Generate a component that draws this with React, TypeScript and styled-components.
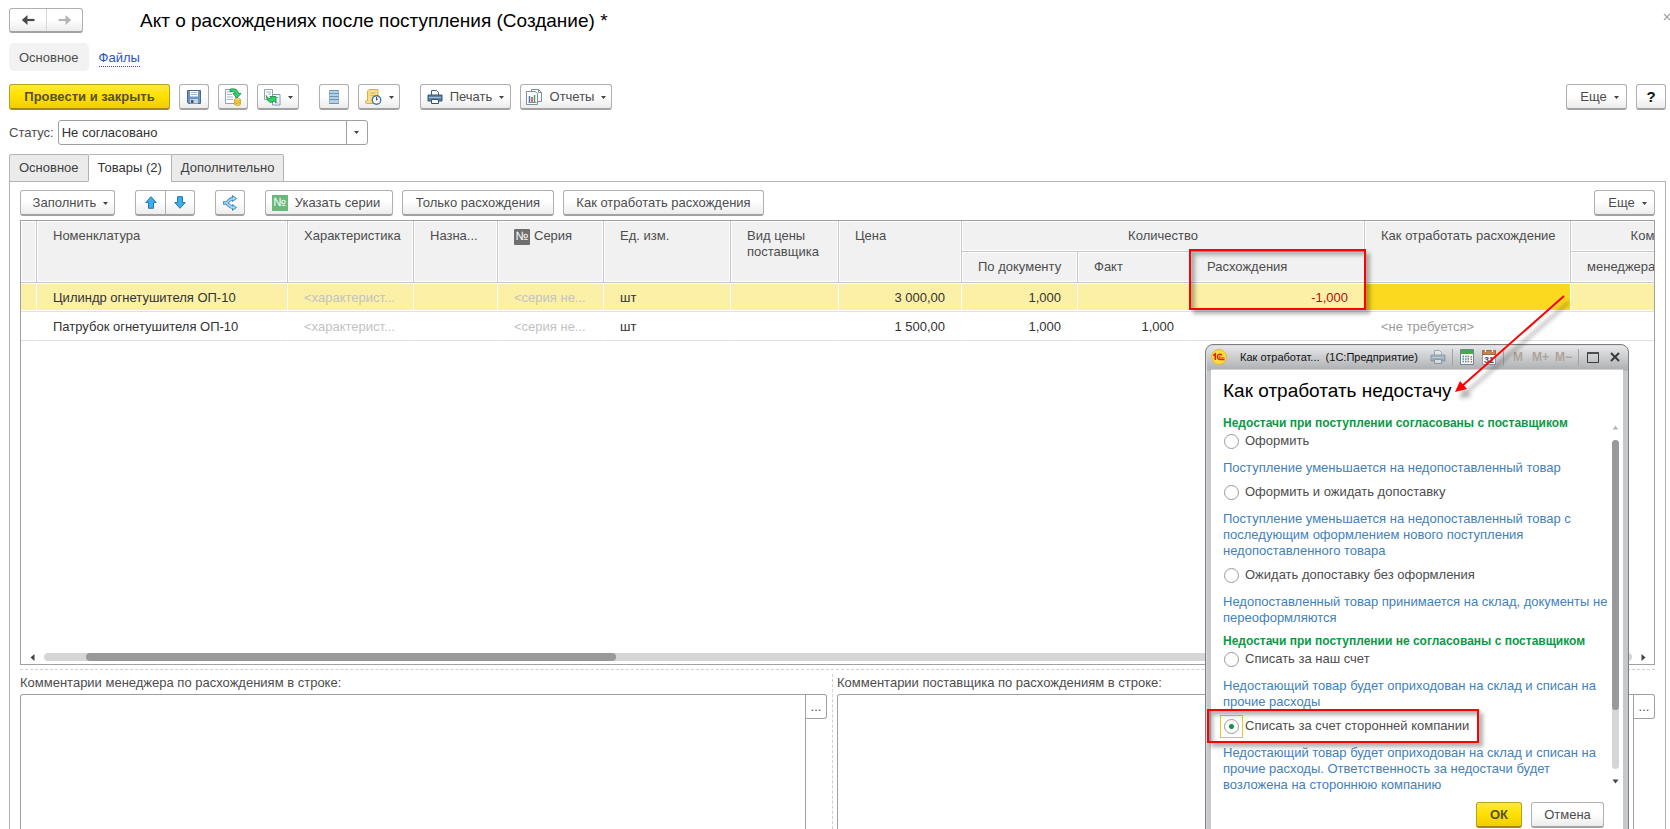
import React, { useState } from "react";
import styled, { createGlobalStyle, css } from "styled-components";

const Global = createGlobalStyle`
  *, *::before, *::after { box-sizing: border-box; }
  body { margin: 0; background: #fff; }
  body, button, input, select, textarea {
    font-family: "Liberation Sans", Arial, sans-serif;
    font-size: 13px;
    line-height: 16px;
    color: #4d4d4d;
  }
`;

/* ---------- page frame ---------- */

const Page = styled.main`
  position: relative;
  display: flex;
  flex-direction: column;
  height: 100vh;
  min-height: 640px;
  padding: 8px 4px 0 9px;
  overflow: hidden;
`;

const TitleRow = styled.header`
  display: flex;
  align-items: center;
  height: 25px;
  gap: 57px;
`;

const Title = styled.h1`
  margin: 0;
  flex: 1;
  font-size: 19px;
  line-height: 24px;
  font-weight: 400;
  color: #000;
`;

const CloseForm = styled.button`
  position: absolute;
  top: 9px;
  right: -5px;
  width: 16px;
  height: 16px;
  padding: 0;
  border: 0;
  background: none;
  color: #a0a0a0;
`;

const SectionNav = styled.nav`
  display: flex;
  align-items: center;
  gap: 10px;
  margin: 10px 0 13px;
`;

const SectionCurrent = styled.button`
  height: 28px;
  padding: 1px 10px 0;
  border: 0;
  border-radius: 5px;
  background: #f2f2f2;
`;

const SectionLink = styled.a`
  padding-top: 2px;
  color: #2a53c0;
  text-decoration: none;
  border-bottom: 1px dotted #2a53c0;
`;

const Bar = styled.div`
  display: flex;
  gap: 9px;
`;

const Gap = styled.span<{ $grow?: boolean }>`
  ${(p) => (p.$grow ? "flex: 1;" : "width: 2px;")}
`;

const raised = css`
  border: 1px solid #b0b0b0;
  border-bottom: 2px solid #a2a2a2;
  border-radius: 3px;
  background: linear-gradient(#fff 45%, #ececec);
`;

const Button = styled.button<{ $w: number; $primary?: boolean; $menu?: boolean; $lead?: boolean; $help?: boolean }>`
  ${raised}
  display: inline-flex;
  align-items: center;
  justify-content: center;
  flex: none;
  gap: 7px;
  width: ${(p) => p.$w}px;
  height: 26px;
  padding: 1px ${(p) => (p.$lead ? 6 : 0)}px 0 ${(p) => (p.$menu ? 6 : 0)}px;
  white-space: nowrap;
  ${(p) => p.$help && "font-size: 15px; font-weight: 700; color: #111;"}
  ${(p) =>
    p.$primary &&
    css`
      border-color: #b8a21a;
      border-bottom-color: #a08c10;
      background: linear-gradient(#ffe93a, #ffe000 50%, #f0ce00);
      font-weight: 700;
      color: #57502a;
    `}
`;

const Pair = styled.div`
  display: flex;
  ${raised}
`;

const PairButton = styled.button`
  display: flex;
  align-items: center;
  justify-content: center;
  width: 29px;
  height: 23px;
  padding: 0;
  border: 0;
  background: none;
  & + & {
    border-left: 1px solid #b0b0b0;
  }
`;

const HistoryPair = styled(Pair)`
  ${PairButton} {
    width: 36px;
    height: 22px;
  }
  ${PairButton} + ${PairButton} {
    border-color: #d8d8d8;
  }
`;

/* ---------- status field ---------- */

const StatusRow = styled.div`
  display: flex;
  align-items: center;
  gap: 4px;
  margin: 10px 0 9px;
`;

const SelectBox = styled.div`
  position: relative;
  width: 310px;
  svg {
    position: absolute;
    right: 9px;
    top: 11px;
    pointer-events: none;
  }
  &::after {
    content: "";
    position: absolute;
    right: 21px;
    top: 0;
    bottom: 0;
    border-left: 1px solid #a0a0a0;
  }
`;

const Select = styled.select`
  appearance: none;
  display: block;
  width: 100%;
  height: 25px;
  padding: 0 24px 0 3px;
  border: 1px solid #a0a0a0;
  border-radius: 3px;
  background: #fff;
  color: #333;
`;

/* ---------- tabs ---------- */

const Tabs = styled.div`
  display: flex;
  position: relative;
  z-index: 1;
`;

const Tab = styled.button<{ $on?: boolean }>`
  height: 28px;
  margin-bottom: -1px;
  padding: 0 9px;
  border: 1px solid #b3b3b3;
  background: ${(p) => (p.$on ? "#fff" : "#ebebeb")};
  border-bottom-color: ${(p) => (p.$on ? "#fff" : "#b3b3b3")};
  border-radius: 2px 2px 0 0;
  color: ${(p) => (p.$on ? "#333" : "#404040")};
  & + & {
    margin-left: -1px;
  }
`;

const Panel = styled.section`
  flex: 1;
  display: flex;
  flex-direction: column;
  min-height: 0;
  padding: 8px 10px 0;
  border: 1px solid #b3b3b3;
  border-bottom: 0;
`;

/* ---------- goods table ---------- */

const Grid = styled.div`
  flex: 1;
  display: flex;
  flex-direction: column;
  justify-content: space-between;
  min-height: 0;
  margin-top: 4px;
  border: 1px solid #a0a0a0;
  overflow: hidden;
`;

const Table = styled.table`
  table-layout: fixed;
  width: 1652px;
  border-collapse: separate;
  border-spacing: 0;
`;

const Th = styled.th<{ $center?: boolean }>`
  position: relative;
  height: 31px;
  padding: 7px 0 0 16px;
  border-right: 1px solid #c6c6c6;
  border-bottom: 1px solid #c6c6c6;
  box-shadow: inset 0 0 0 1px #fff;
  background: #f1f1f1;
  font-weight: 400;
  vertical-align: top;
  text-align: left;
  white-space: nowrap;
  ${(p) => p.$center && "padding-left: 0; text-align: center;"}
`;

const Td = styled.td<{ $right?: boolean; $tone?: "muted" | "hint" | "minus" | "current" }>`
  height: 29px;
  padding: 1px 16px 0;
  border-right: 1px solid #fff;
  border-bottom: 1px solid #e0e0e0;
  white-space: nowrap;
  overflow: hidden;
  text-align: ${(p) => (p.$right ? "right" : "left")};
  color: ${(p) =>
    p.$tone === "muted" ? "#c3c3c3" : p.$tone === "hint" ? "#9b9b9b" : p.$tone === "minus" ? "#b01010" : "#333"};
`;

const Row = styled.tr<{ $selected?: boolean }>`
  ${(p) =>
    p.$selected &&
    css`
      ${Td} {
        background: #fcf0a6;
        box-shadow: inset 0 1px #fff, inset 0 -1px #fff;
      }
      ${Td}:nth-child(12) {
        background: #fbd91f;
      }
    `}
`;

const NumberBadge = styled.span<{ $green?: boolean }>`
  display: inline-block;
  width: 16px;
  height: 16px;
  line-height: 15px;
  font-size: 12px;
  text-align: center;
  color: #fff;
  background: ${(p) => (p.$green ? "#67b97c" : "#6f6f6f")};
  ${(p) => !p.$green && "margin-right: 4px; border-radius: 1px;"}
`;

const RedFrame = styled.div`
  position: absolute;
  z-index: 2;
  border: 2px solid #f00;
  box-shadow: 4px 4px 4px rgba(0, 0, 0, 0.3), inset 4px 4px 4px rgba(0, 0, 0, 0.3);
  pointer-events: none;
`;

const CellFrame = styled(RedFrame)`
  top: -3px;
  left: -2px;
  right: -2px;
  height: 61px;
`;

const HScroll = styled.div`
  display: flex;
  align-items: center;
  gap: 8px;
  padding: 0 7px 3px 8px;
`;

const HTrack = styled.div`
  flex: 1;
  height: 8px;
  padding-left: 42px;
  border-radius: 4px;
  background: #d6d6d6;
`;

const HThumb = styled.div`
  width: 530px;
  height: 8px;
  border-radius: 4px;
  background: #999;
`;

/* ---------- comments ---------- */

const Comments = styled.div`
  display: grid;
  grid-template-columns: 813px 1fr;
  flex: 0 0 160px;
  margin-top: 4px;
  border-top: 1px dashed #d0d0d0;
`;

const Comment = styled.div`
  display: grid;
  grid-template-rows: 17px 1fr;
  grid-template-columns: 1fr 21px;
  row-gap: 3px;
  margin-top: 4px;
  & + & {
    padding-left: 4px;
  }
  &:first-child {
    padding-right: 5px;
    border-right: 1px dashed #d0d0d0;
  }
  label {
    grid-column: 1 / 3;
    padding-top: 1px;
  }
`;

const TextArea = styled.textarea`
  width: 100%;
  height: 100%;
  border: 1px solid #a0a0a0;
  border-bottom: 0;
  border-radius: 3px 0 0 0;
  resize: none;
`;

const More = styled.button`
  height: 25px;
  padding: 0;
  border: 1px solid #a0a0a0;
  border-left: 0;
  border-radius: 0 3px 3px 0;
  background: #fff;
`;

/* ---------- floating window ---------- */

const Window = styled.section`
  position: absolute;
  z-index: 3;
  top: 344px;
  right: 41px;
  width: 424px;
  border: 1px solid #7d7d7d;
  border-radius: 8px 8px 0 0;
  background: linear-gradient(#e9e9ea, #adb0b3 25px, #c6c9cc 26px);
  padding: 0 5px 5px;
  box-shadow: inset 1px 1px #d9dbdd;
`;

const WindowBar = styled.div`
  display: flex;
  align-items: center;
  height: 24px;
  color: #111;
  font-size: 11px;
`;

const Caption = styled.span`
  flex: 1;
  margin-left: 13px;
  white-space: pre;
`;

const WindowTools = styled.div`
  display: flex;
  align-items: center;
  gap: 6px;
`;

const Tool = styled.button`
  display: flex;
  align-items: center;
  justify-content: center;
  height: 16px;
  min-width: 16px;
  padding: 0;
  border: 0;
  background: none;
  font-size: 12px;
  font-weight: 700;
  color: #b0a398;
`;

const Divider = styled.span`
  width: 1px;
  height: 17px;
  background: #a2a2a2;
`;

const WindowBody = styled.div`
  padding: 9px 2px 2px 12px;
  background: #fff;
  border-top: 1px solid #d0d0d0;
`;

const WindowTitle = styled.h2`
  margin: 0 0 12px;
  font-size: 19px;
  line-height: 24px;
  font-weight: 400;
  color: #000;
`;

const Scroller = styled.div`
  display: flex;
  justify-content: space-between;
`;

const Options = styled.div`
  width: 387px;
`;

const GroupTitle = styled.h3`
  margin: 0 0 1px;
  font-size: 12px;
  line-height: 16px;
  font-weight: 700;
  color: #0a9a46;
  white-space: nowrap;
`;

const Option = styled.div`
  position: relative;
`;

const OptionFrame = styled(RedFrame)`
  top: -8px;
  left: -16px;
  width: 272px;
  height: 34px;
`;

const OptionLabel = styled.label`
  display: flex;
  align-items: center;
  gap: 6px;
  height: 18px;
  padding-left: 1px;
`;

const Radio = styled.input`
  appearance: none;
  width: 15px;
  height: 15px;
  margin: 0;
  border: 1px solid #9a9a9a;
  border-radius: 50%;
  background: #fff;
  &:checked {
    background: radial-gradient(circle, #0a9a46 2px, #fff 3px);
  }
`;

const FocusBox = styled.span<{ $on: boolean }>`
  display: flex;
  ${(p) => p.$on && "box-shadow: 0 0 0 3px #fff, 0 0 0 4px #f3c418;"}
`;

const Hint = styled.p`
  margin: 0;
  padding: 10px 0 7px;
  color: #4281bb;
`;

const VScroll = styled.div`
  display: flex;
  flex-direction: column;
  align-items: center;
  gap: 9px;
  width: 11px;
  padding: 9px 0 15px;
`;

const VTrack = styled.div`
  flex: 1;
  width: 7px;
  border-radius: 4px;
  background: #d6d6d6;
`;

const VThumb = styled.div`
  height: 82%;
  border-radius: 4px;
  background: #999;
`;

const WindowButtons = styled.div`
  display: flex;
  justify-content: flex-end;
  gap: 9px;
  padding: 2px 17px 4px 0;
`;

const Pointer = styled.svg`
  position: absolute;
  z-index: 4;
  top: 290px;
  right: 95px;
  pointer-events: none;
`;

/* ---------- icons ---------- */

const Caret = () => (
  <svg width="5" height="3" viewBox="0 0 5 3" aria-hidden="true">
    <path d="M0 0h5L2.5 3z" fill="#444" />
  </svg>
);

const NavArrow = ({ flip, color }: { flip?: boolean; color: string }) => (
  <svg width="14" height="12" viewBox="0 0 14 12" aria-hidden="true">
    <g transform={flip ? "matrix(-1 0 0 1 14 0)" : undefined}>
      <path d="M.8 6l5.700-5v3.800L4.500 6l2 1.200V11z" fill={color} />
      <path d="M3 6h10.500" stroke={color} strokeWidth="2.200" />
    </g>
  </svg>
);

const SaveIcon = () => (
  <svg width="16" height="16" viewBox="0 0 16 16" aria-hidden="true">
    <path d="M1.500 1.500h13v13h-12l-1-1z" fill="#6d94c0" stroke="#47698f" />
    <path d="M4 2h8v5.500H4z" fill="#fff" />
    <path d="M5 3.500h6M5 5.500h6" stroke="#9db3cc" />
    <path d="M4 10h8v4.500H4z" fill="#c4d3e3" />
    <path d="M5 11h2.500v3H5z" fill="#385878" />
  </svg>
);

const PostIcon = () => (
  <svg width="18" height="18" viewBox="0 0 18 18" aria-hidden="true">
    <path d="M1.500 1.500h10v14h-10z" fill="#fff" stroke="#93a3b1" />
    <path d="M3 4h4M3 6.500h5M3 9h6M3 11.500h6" stroke="#a9b5c0" />
    <path d="M6 1.200c5-1.200 8 .6 8.500 4.300h2.500l-4 4.500-4-4.500h2.300c-.3-1.800-2-2.300-5.300-2z" fill="#2fd366" stroke="#138a42" strokeWidth=".8" />
    <path d="M10.500 11.800v4.400c0 1.600 6 1.600 6 0v-4.400z" fill="#f4cf4f" stroke="#d6a92a" />
    <ellipse cx="13.500" cy="11.800" rx="3" ry="1.200" fill="#fbe79a" stroke="#d6a92a" />
    <path d="M10.500 14.200c0 1.300 6 1.300 6 0" fill="none" stroke="#d6a92a" />
  </svg>
);

const BasedOnIcon = () => (
  <svg width="17" height="17" viewBox="0 0 17 17" aria-hidden="true">
    <path d="M.5.5h8v10h-8z" fill="#fff" stroke="#93a3b1" />
    <path d="M2 3h5M4 5h3" stroke="#a9b5c0" />
    <path d="M8.500 5.500h7.500v10.500h-7.500z" fill="#fff" stroke="#7d99b2" />
    <path d="M12 8.500h2.500M11 14h3.500" stroke="#a9b5c0" />
    <path d="M2.200 4.500c1.300 2.800 3 3.600 5 2.400L5.800 5.600H12v6.200L10.200 10c-3.400 2.800-7.200 1-8-5.500z" transform="translate(0 2)" fill="#2fd366" stroke="#138a42" strokeWidth=".9" />
  </svg>
);

const RegisterIcon = () => (
  <svg width="12" height="16" viewBox="0 0 12 16" aria-hidden="true">
    <path d="M1 1h10v14H1z" fill="#b5cfe4" />
    <path d="M1 1.500h10M1 4.500h10M1 7.500h10M1 10.500h10M1 14.500h10" stroke="#6b93b5" strokeWidth="1.200" />
    <path d="M1.500 1v13.500M10.500 1v13.500" stroke="#88a9c5" strokeWidth=".7" />
  </svg>
);

const ReminderIcon = () => (
  <svg width="18" height="18" viewBox="0 0 18 18" aria-hidden="true">
    <path d="M5 1.500h9v12c0 1.500-.8 2-1.800 2H2.800c-1.800 0-1.800-3 0-3h.7V3z" fill="#f7dc8c" stroke="#d9ad4d" />
    <path d="M6.500 5h5M6.500 7.500h4" stroke="#dcb660" />
    <circle cx="12.500" cy="12" r="4.200" fill="#fff" stroke="#4674a5" strokeWidth="1.400" />
    <path d="M12.500 9v3.200" fill="none" stroke="#35577a" />
    <path d="M12.500 12.200l1.800-1.700" stroke="#d33" />
  </svg>
);

const PrinterIcon = ({ pale }: { pale?: boolean }) => (
  <svg width="16" height="16" viewBox="0 0 16 16" aria-hidden="true" opacity={pale ? 0.4 : 1}>
    <path d="M4.500 6.500v-5h5l2 2v3" fill="#fff" stroke="#41617e" />
    <path d="M1 6h14v6H1z" fill="#5b84a8" stroke="#35546f" />
    <path d="M2 8.500h12" stroke="#9fc0da" />
    <path d="M4.500 10.500h7v4h-7z" fill="#fff" stroke="#35546f" />
  </svg>
);

const ReportIcon = () => (
  <svg width="17" height="16" viewBox="0 0 17 16" aria-hidden="true">
    <path d="M5.500.500h7l3 3v9h-10z" fill="#fff" stroke="#7f8e9c" />
    <path d="M12.500.500v3h3" fill="none" stroke="#7f8e9c" />
    <path d="M.500 2.500h8.500l2.500 2v11h-11z" fill="#fff" stroke="#7f8e9c" />
    <path d="M3.500 7v6" stroke="#3a78b0" strokeWidth="1.500" />
    <path d="M6 8v5" stroke="#e23a2e" strokeWidth="1.500" />
    <path d="M8.500 6v7" stroke="#33a852" strokeWidth="1.500" />
    <path d="M2.500 13.500h8" stroke="#7f8e9c" />
  </svg>
);

const MoveIcon = ({ down }: { down?: boolean }) => (
  <svg width="12" height="13" viewBox="0 0 12 13" aria-hidden="true">
    <path
      transform={down ? "matrix(1 0 0 -1 0 13)" : undefined}
      d="M6 .7l5.200 5.800H8.500v5.800h-5V6.500H.8z"
      fill="#38b0f0"
      stroke="#2676a8"
    />
  </svg>
);

const SplitIcon = () => (
  <svg width="16" height="16" viewBox="0 0 16 16" aria-hidden="true">
    <g fill="none" stroke="#3c87b5" strokeWidth="3.400">
      <path d="M1 8h3c2-.2 3-4.500 7-4.500M4 8c2 .2 3 4.500 7 4.500" />
    </g>
    <path d="M10.500.600l4 2.900-4 2.900zM10.500 9.600l4 2.900-4 2.900z" fill="#a9dbf5" stroke="#3c87b5" />
    <g fill="none" stroke="#a9dbf5" strokeWidth="1.600">
      <path d="M1.800 8H4c2-.2 3-4.500 7.500-4.500M4 8c2 .2 3 4.500 7.500 4.500" />
    </g>
  </svg>
);

const ScrollArrow = ({ dir, color = "#444" }: { dir: "left" | "right" | "up" | "down"; color?: string }) => {
  const d = {
    left: "M5.500 0v7L1.500 3.500z",
    right: "M1.500 0v7l4-3.500z",
    up: "M.5 5.500h6l-3-4z",
    down: "M.5 1.500h6l-3 4z",
  }[dir];
  return (
    <svg width="7" height="7" viewBox="0 0 7 7" aria-hidden="true">
      <path d={d} fill={color} />
    </svg>
  );
};

const AppLogo = () => (
  <svg width="16" height="16" viewBox="0 0 16 16" aria-hidden="true">
    <circle cx="8" cy="8" r="7.500" fill="#fbdc3c" stroke="#e0b52c" strokeWidth=".8" />
    <path d="M2.300 6.500L4.300 5v6" fill="none" stroke="#d8201c" strokeWidth="1.600" />
    <path d="M10.700 6.200c-1.300-1.600-4.200-1-4.200 1.600 0 2 1.500 2.700 3 2.700h4" fill="none" stroke="#d8201c" strokeWidth="1.400" />
    <path d="M9.800 7.300c-1-.6-1.600.1-1.500.8.1.6.6.8 1.200.8h4" fill="none" stroke="#d8201c" strokeWidth=".8" />
  </svg>
);

const CalculatorIcon = () => (
  <svg width="14" height="16" viewBox="0 0 14 16" aria-hidden="true">
    <path d="M.5.5h13v15H.5z" fill="#f4f6f7" stroke="#6f8795" />
    <path d="M1 1h12v4H1z" fill="#3fae49" />
    <path d="M2.500 7.500h7M2.500 10h7M2.500 12.500h7" stroke="#667f8f" strokeWidth="1.500" strokeDasharray="1.500 1" />
    <path d="M11.300 7v6.500" stroke="#d2533f" strokeWidth="1.300" strokeDasharray="1.500 1" />
  </svg>
);

const CalendarIcon = () => (
  <svg width="14" height="16" viewBox="0 0 14 16" aria-hidden="true">
    <path d="M.5 1.500h13v14H.5z" fill="#fff" stroke="#8d9aa5" />
    <path d="M.5 1.500h13v4H.5z" fill="#c08457" stroke="#a4683d" />
    <path d="M3.500 0v3M10.500 0v3" stroke="#fff" strokeWidth="1.200" />
    <text x="7" y="13.500" textAnchor="middle" fontSize="9" fontWeight="700" fill="#4a5a68">31</text>
  </svg>
);

/* ---------- data ---------- */

const columns = [16, 251, 126, 84, 106, 127, 108, 123, 116, 113, 174, 206, 101, 101];

const goods = [
  { name: "Цилиндр огнетушителя ОП-10", price: "3 000,00", doc: "1,000", fact: "", diff: "-1,000", action: "", selected: true },
  { name: "Патрубок огнетушителя ОП-10", price: "1 500,00", doc: "1,000", fact: "1,000", diff: "", action: "<не требуется>", selected: false },
];

type Choice = { id: string; label: string; hint: string; framed?: boolean };

const groups: { title: string; choices: Choice[] }[] = [
  {
    title: "Недостачи при поступлении согласованы с поставщиком",
    choices: [
      { id: "issue", label: "Оформить", hint: "Поступление уменьшается на недопоставленный товар" },
      {
        id: "issueWait",
        label: "Оформить и ожидать допоставку",
        hint: "Поступление уменьшается на недопоставленный товар с последующим оформлением нового поступления недопоставленного товара",
      },
      {
        id: "wait",
        label: "Ожидать допоставку без оформления",
        hint: "Недопоставленный товар принимается на склад, документы не переоформляются",
      },
    ],
  },
  {
    title: "Недостачи при поступлении не согласованы с поставщиком",
    choices: [
      {
        id: "ours",
        label: "Списать за наш счет",
        hint: "Недостающий товар будет оприходован на склад и списан на прочие расходы",
      },
      {
        id: "third",
        label: "Списать за счет сторонней компании",
        hint: "Недостающий товар будет оприходован на склад и списан на прочие расходы. Ответственность за недостачи будет возложена на стороннюю компанию",
        framed: true,
      },
    ],
  },
];

/* ---------- parts ---------- */

const GoodsTable = () => (
  <Table>
    <colgroup>
      {columns.map((w, i) => (
        <col key={i} width={w} />
      ))}
    </colgroup>
    <thead>
      <tr>
        <Th rowSpan={2} />
        <Th rowSpan={2}>Номенклатура</Th>
        <Th rowSpan={2}>Характеристика</Th>
        <Th rowSpan={2}>Назна...</Th>
        <Th rowSpan={2}>
          <NumberBadge>№</NumberBadge>Серия
        </Th>
        <Th rowSpan={2}>Ед. изм.</Th>
        <Th rowSpan={2}>
          Вид цены
          <br />
          поставщика
        </Th>
        <Th rowSpan={2}>Цена</Th>
        <Th colSpan={3} $center>Количество</Th>
        <Th rowSpan={2}>Как отработать расхождение</Th>
        <Th colSpan={2} $center>Комментарии</Th>
      </tr>
      <tr>
        <Th>По документу</Th>
        <Th>Факт</Th>
        <Th>
          Расхождения
          <CellFrame />
        </Th>
        <Th>менеджера</Th>
        <Th>поставщика</Th>
      </tr>
    </thead>
    <tbody>
      {goods.map((g) => (
        <Row key={g.name} $selected={g.selected}>
          <Td />
          <Td>{g.name}</Td>
          <Td $tone="muted">&lt;характерист...</Td>
          <Td />
          <Td $tone="muted">&lt;серия не...</Td>
          <Td>шт</Td>
          <Td />
          <Td $right>{g.price}</Td>
          <Td $right>{g.doc}</Td>
          <Td $right>{g.fact}</Td>
          <Td $right $tone="minus">{g.diff}</Td>
          <Td $tone="hint">{g.action}</Td>
          <Td />
          <Td />
        </Row>
      ))}
    </tbody>
  </Table>
);

const ShortageWindow = () => {
  const [choice, setChoice] = useState("third");
  return (
    <Window role="dialog" aria-labelledby="shortage-title">
      <WindowBar>
        <AppLogo />
        <Caption>{"Как отработат...  (1С:Предприятие)"}</Caption>
        <WindowTools>
          <Tool aria-label="Печать"><PrinterIcon pale /></Tool>
          <Divider />
          <Tool aria-label="Калькулятор"><CalculatorIcon /></Tool>
          <Tool aria-label="Календарь"><CalendarIcon /></Tool>
          <Divider />
          <Tool>M</Tool>
          <Tool>M+</Tool>
          <Tool>M−</Tool>
          <Divider />
          <Tool aria-label="Развернуть">
            <svg width="12" height="11" viewBox="0 0 12 11">
              <path d="M.5 1h11v9.500H.5z" fill="none" stroke="#3a3a3a" />
              <path d="M0 1h12" stroke="#3a3a3a" strokeWidth="1.500" />
            </svg>
          </Tool>
          <Tool aria-label="Закрыть">
            <svg width="10" height="10" viewBox="0 0 10 10">
              <path d="M1 1l8 8M9 1L1 9" stroke="#3a3a3a" strokeWidth="2" />
            </svg>
          </Tool>
        </WindowTools>
      </WindowBar>
      <WindowBody>
        <WindowTitle id="shortage-title">Как отработать недостачу</WindowTitle>
        <Scroller>
          <Options>
            {groups.map((g) => (
              <div key={g.title}>
                <GroupTitle>{g.title}</GroupTitle>
                {g.choices.map((c) => (
                  <Option key={c.id}>
                    <OptionLabel htmlFor={c.id}>
                      <FocusBox $on={choice === c.id}>
                        <Radio
                          type="radio"
                          name="shortage"
                          id={c.id}
                          checked={choice === c.id}
                          onChange={() => setChoice(c.id)}
                        />
                      </FocusBox>
                      {c.label}
                    </OptionLabel>
                    <Hint>{c.hint}</Hint>
                    {c.framed && <OptionFrame />}
                  </Option>
                ))}
              </div>
            ))}
          </Options>
          <VScroll>
            <ScrollArrow dir="up" color="#b8b8b8" />
            <VTrack>
              <VThumb />
            </VTrack>
            <ScrollArrow dir="down" />
          </VScroll>
        </Scroller>
        <WindowButtons>
          <Button $w={46} $primary>ОК</Button>
          <Button $w={73}>Отмена</Button>
        </WindowButtons>
      </WindowBody>
    </Window>
  );
};

const CalloutArrow = () => (
  <Pointer width="130" height="120" viewBox="0 0 130 120" aria-hidden="true">
    <defs>
      <filter id="soft" x="-20%" y="-20%" width="140%" height="140%">
        <feGaussianBlur stdDeviation="2" />
      </filter>
    </defs>
    <g transform="translate(5 6)" opacity=".3" filter="url(#soft)">
      <path d="M119 6L17 96" stroke="#000" strokeWidth="3" />
      <path d="M10 102l4-10 7 8z" fill="#000" stroke="#000" />
    </g>
    <path d="M119 6L17 96" stroke="#f00" strokeWidth="2" />
    <path d="M10 102l5-11 7 8z" fill="#f00" />
  </Pointer>
);

export default function App() {
  return (
    <>
      <Global />
      <Page>
        <TitleRow>
          <HistoryPair>
            <PairButton aria-label="Назад"><NavArrow color="#4a4a4a" /></PairButton>
            <PairButton aria-label="Вперед"><NavArrow flip color="#b5b5b5" /></PairButton>
          </HistoryPair>
          <Title>Акт о расхождениях после поступления (Создание) *</Title>
          <CloseForm aria-label="Закрыть">
            <svg width="8" height="8" viewBox="0 0 8 8">
              <path d="M1 1l6 6M7 1L1 7" stroke="currentColor" strokeWidth="1.200" />
            </svg>
          </CloseForm>
        </TitleRow>

        <SectionNav>
          <SectionCurrent>Основное</SectionCurrent>
          <SectionLink href="#files">Файлы</SectionLink>
        </SectionNav>

        <Bar>
          <Button $w={161} $primary>Провести и закрыть</Button>
          <Button $w={30} aria-label="Записать"><SaveIcon /></Button>
          <Button $w={30} aria-label="Провести"><PostIcon /></Button>
          <Button $w={42} aria-label="Создать на основании"><BasedOnIcon /><Caret /></Button>
          <Gap />
          <Button $w={30} aria-label="Движения"><RegisterIcon /></Button>
          <Button $w={42} aria-label="Напоминание"><ReminderIcon /><Caret /></Button>
          <Gap />
          <Button $w={91}><PrinterIcon />Печать<Caret /></Button>
          <Button $w={92}><ReportIcon />Отчеты<Caret /></Button>
          <Gap $grow />
          <Button $w={61} $menu>Еще<Caret /></Button>
          <Button $w={30} $help>?</Button>
        </Bar>

        <StatusRow>
          <label htmlFor="status">Статус:</label>
          <SelectBox>
            <Select id="status" defaultValue="no">
              <option value="no">Не согласовано</option>
            </Select>
            <Caret />
          </SelectBox>
        </StatusRow>

        <Tabs role="tablist">
          <Tab role="tab">Основное</Tab>
          <Tab role="tab" $on aria-selected="true">Товары (2)</Tab>
          <Tab role="tab">Дополнительно</Tab>
        </Tabs>

        <Panel>
          <Bar>
            <Button $w={95} $menu>Заполнить<Caret /></Button>
            <Gap />
            <Pair>
              <PairButton aria-label="Вверх"><MoveIcon /></PairButton>
              <PairButton aria-label="Вниз"><MoveIcon down /></PairButton>
            </Pair>
            <Gap />
            <Button $w={30} aria-label="Разбить строку"><SplitIcon /></Button>
            <Gap />
            <Button $w={128} $lead><NumberBadge $green>№</NumberBadge>Указать серии</Button>
            <Button $w={152}>Только расхождения</Button>
            <Button $w={201}>Как отработать расхождения</Button>
            <Gap $grow />
            <Button $w={61} $menu>Еще<Caret /></Button>
          </Bar>

          <Grid>
            <GoodsTable />
            <HScroll>
              <ScrollArrow dir="left" />
              <HTrack>
                <HThumb />
              </HTrack>
              <ScrollArrow dir="right" />
            </HScroll>
          </Grid>

          <Comments>
            <Comment>
              <label htmlFor="manager">Комментарии менеджера по расхождениям в строке:</label>
              <TextArea id="manager" />
              <More>...</More>
            </Comment>
            <Comment>
              <label htmlFor="supplier">Комментарии поставщика по расхождениям в строке:</label>
              <TextArea id="supplier" />
              <More>...</More>
            </Comment>
          </Comments>
        </Panel>

        <ShortageWindow />
        <CalloutArrow />
      </Page>
    </>
  );
}
